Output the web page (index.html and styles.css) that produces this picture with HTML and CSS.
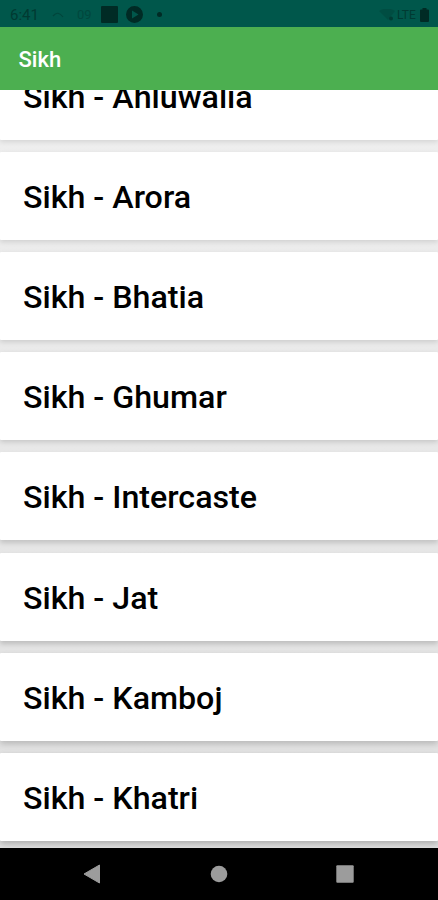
FILE: index.html
```html
<!DOCTYPE html>
<html lang="en">
<head>
<meta charset="utf-8">
<title>Sikh</title>
<link rel="stylesheet" href="styles.css">
</head>
<body>
<div class="screen">
  <div class="status">
    <span class="clock">6:41</span>
    <svg class="arc" width="12" height="8" viewBox="0 0 12 8"><path d="M1 5Q6-1 11 6" fill="none" stroke="currentColor" stroke-width="1.2"/></svg>
    <span class="zero">09</span>
    <svg class="block" width="17" height="17" viewBox="0 0 17 17"><rect width="17" height="17" rx="1" fill="currentColor"/></svg>
    <svg class="play" width="17" height="17" viewBox="0 0 17 17"><path fill="currentColor" fill-rule="evenodd" d="M8.500 0a8.500 8.500 0 1 0 0 17a8.500 8.500 0 0 0 0-17ZM6 4.500L12.500 8.500L6 12.500Z"/></svg>
    <span class="dot"></span>
    <svg class="wifi" width="16" height="12" viewBox="0 0 16 12"><path d="M0 2Q8-3 16 2L9 11Z" fill="currentColor" opacity=".35"/><circle cx="12" cy="9.500" r="2" fill="currentColor"/></svg>
    <span class="lte">LTE</span>
    <svg class="battery" width="9" height="14" viewBox="0 0 9 14"><path d="M2.500 0h4v1.500H8Q9 1.500 9 2.500V13Q9 14 8 14H1Q0 14 0 13V2.500Q0 1.500 1 1.500h1.500Z" fill="currentColor"/></svg>
  </div>
  <header class="appbar">Sikh</header>
  <main class="list">
    <div class="card s1">Sikh - Ahluwalia</div>
    <div class="card s2">Sikh - Arora</div>
    <div class="card s3">Sikh - Bhatia</div>
    <div class="card s4">Sikh - Ghumar</div>
    <div class="card s5">Sikh - Intercaste</div>
    <div class="card s6">Sikh - Jat</div>
    <div class="card s7">Sikh - Kamboj</div>
    <div class="card s8">Sikh - Khatri</div>
  </main>
  <nav class="navbar">
    <svg width="18" height="20" viewBox="0 0 18 20"><path d="M1 10L16.500 1V19Z" fill="currentColor" stroke="currentColor" stroke-linejoin="round"/></svg>
    <svg width="18" height="18" viewBox="0 0 18 18"><circle cx="9" cy="9" r="8.300" fill="currentColor"/></svg>
    <svg width="18" height="18" viewBox="0 0 18 18"><rect x=".3" y=".3" width="17.400" height="17.400" rx="1" fill="currentColor"/></svg>
  </nav>
</div>
</body>
</html>
```
FILE: styles.css
```css
* { box-sizing: border-box; }
body {
  margin: 0;
  font-family: Roboto, sans-serif;
}
.screen {
  display: flex;
  flex-direction: column;
  width: 438px;
  height: 900px;
  overflow: hidden;
  background: #fafafa;
}
.status {
  display: flex;
  align-items: center;
  flex: 0 0 27px;
  padding: 2px 8px 0 10px;
  background: #00574b;
  color: #002b25;
}
.status svg { display: block; flex: none; }
.clock { width: 42px; font-size: 15px; opacity: .65; }
.arc { opacity: .4; }
.zero { width: 24px; margin-left: 13px; font-size: 13px; opacity: .35; }
.play { margin-left: 8px; }
.dot {
  width: 5px;
  height: 5px;
  margin-left: 14px;
  border-radius: 50%;
  background: currentColor;
}
.wifi { margin-left: auto; opacity: .6; }
.lte { margin-left: 2px; width: 23px; font-size: 12px; opacity: .65; }
.battery { margin-right: 1px; }
.appbar {
  flex: none;
  height: 62.500px;
  padding-left: 18.500px;
  background: #4caf50;
  color: #fff;
  font-size: 22px;
  font-weight: 500;
  line-height: 65px;
}
.list {
  display: flex;
  flex: 1;
  flex-direction: column;
  gap: 12.170px;
  min-height: 0;
  overflow: hidden;
  background: linear-gradient(#efefef, #e0e0e0);
}
.card {
  flex: none;
  height: 88px;
  padding-left: 23px;
  border-radius: 1px;
  background: #fff;
  color: #000;
  font-size: 32.200px;
  font-weight: 500;
  line-height: 90px;
  white-space: nowrap;
}
.s1 { margin-top: -37.700px; box-shadow: 0 2px 5px #0000001c; }
.s2 { box-shadow: 0 2px 5px #0000001f; }
.s3 { box-shadow: 0 2px 5px #00000022; }
.s4 { box-shadow: 0 2px 5px #00000026; }
.s5 { box-shadow: 0 3px 5px #00000028; }
.s6 { box-shadow: 0 3px 5px #0000002c; }
.s7 { box-shadow: 0 3px 6px #00000030; }
.s8 { box-shadow: 0 3px 6px #0000003a; }
.navbar {
  display: flex;
  align-items: center;
  justify-content: space-between;
  flex: 0 0 52.500px;
  padding: 0 84px 0 83px;
  background: #000;
  color: #9c9c9c;
}
.navbar svg { display: block; }
```
